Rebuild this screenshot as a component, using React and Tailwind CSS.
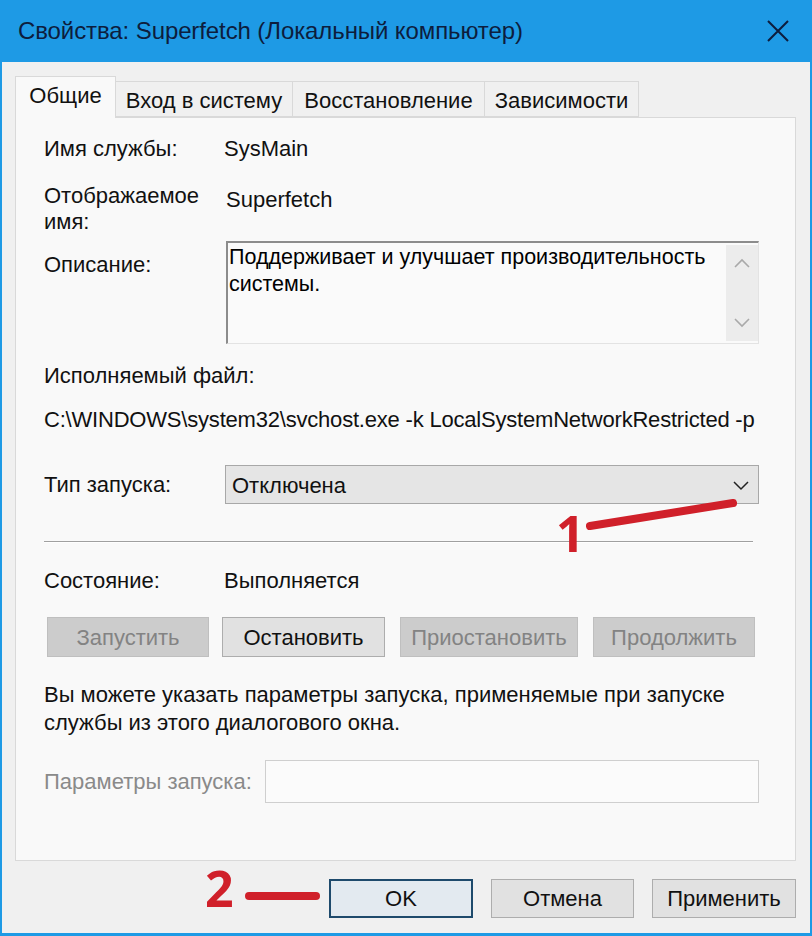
import React from "react";

const F = { fontFamily: '"Liberation Sans", Arial, sans-serif' };

function Btn({ children, disabled, className = "" }) {
  return (
    <div
      className={
        "flex items-center justify-center h-[40px] text-[22px] border " +
        (disabled
          ? "bg-[#cccccc] border-[#bfbfbf] text-[#838383] "
          : "bg-[#e1e1e1] border-[#adadad] text-[#111] ") +
        className
      }
    >
      {children}
    </div>
  );
}

export default function App() {
  return (
    <div className="w-[812px] h-[936px] flex flex-col bg-[#1e9ae5] relative text-[#111]" style={F}>
      {/* title bar */}
      <div className="h-[62px] flex items-center justify-between pl-[18px] pr-[20px] bg-[#1e9ae5]">
        <span className="text-[24px] text-[#0d1d3d] tracking-[-0.1px]">Свойства: Superfetch (Локальный компьютер)</span>
        <svg width="22" height="22" viewBox="0 0 22 22" className="mr-[3px]">
          <path d="M1 1 L21 21 M21 1 L1 21" stroke="#0d1d3d" strokeWidth="2" />
        </svg>
      </div>
      {/* body */}
      <div className="flex-1 mx-[2px] mb-[3px] bg-[#f0f0f0] flex flex-col pl-[13px] pr-[14px]">
        {/* tabs */}
        <div className="flex items-end h-[55px] relative z-10">
          <div className="h-[42px] w-[101px] bg-[#f9f9f9] border border-b-0 border-[#d9d9d9] flex items-center justify-center text-[22px] -mb-px pb-[4px]">
            Общие
          </div>
          <div className="h-[36px] w-[177px] bg-[#f0f0f0] border border-l-0 border-[#d9d9d9] flex items-center justify-center text-[22px] pt-[2px]">
            Вход в систему
          </div>
          <div className="h-[36px] w-[192px] bg-[#f0f0f0] border border-l-0 border-[#d9d9d9] flex items-center justify-center text-[22px] pt-[2px]">
            Восстановление
          </div>
          <div className="h-[36px] w-[154px] bg-[#f0f0f0] border border-l-0 border-[#d9d9d9] flex items-center justify-center text-[22px] pt-[2px]">
            Зависимости
          </div>
        </div>
        {/* panel */}
        <div className="h-[744px] bg-[#f9f9f9] border border-[#d9d9d9] flex flex-col pl-[28px] pr-[36px] text-[22px]">
          <div className="flex h-[26px] mt-[17px] items-center">
            <div className="w-[180px]">Имя службы:</div>
            <div>SysMain</div>
          </div>
          <div className="flex mt-[22px] h-[52px]">
            <div className="w-[182px] leading-[26px]">Отображаемое<br />имя:</div>
            <div className="leading-[26px] pt-[4px]">Superfetch</div>
          </div>
          <div className="flex mt-[6px] h-[103px]">
            <div className="w-[182px] pt-[11px] leading-[26px]">Описание:</div>
            <div className="flex-1 border-t-2 border-l-2 border-[#8c8c8c] border-r border-b border-r-[#e3e3e3] border-b-[#e3e3e3] bg-[#fafafa] flex">
              <div className="flex-1 pl-[1px] pt-[1px] leading-[27px] text-[21.5px] text-black">
                Поддерживает и улучшает производительность системы.
              </div>
              <div className="w-[32px] mt-[2px] mb-[2px] bg-[#ececec] flex flex-col items-center justify-between py-[13px]">
                <svg width="16" height="10" viewBox="0 0 16 10"><path d="M1 9 L8 2 L15 9" stroke="#a9a9a9" strokeWidth="1.6" fill="none" /></svg>
                <svg width="16" height="10" viewBox="0 0 16 10"><path d="M1 1 L8 8 L15 1" stroke="#a9a9a9" strokeWidth="1.6" fill="none" /></svg>
              </div>
            </div>
          </div>
          <div className="mt-[19px] h-[26px] leading-[26px]">Исполняемый файл:</div>
          <div className="mt-[18px] h-[26px] leading-[26px] whitespace-nowrap tracking-[-0.2px]">
            C:\WINDOWS\system32\svchost.exe -k LocalSystemNetworkRestricted -p
          </div>
          <div className="flex mt-[32px] h-[39px] items-center">
            <div className="w-[181px]">Тип запуска:</div>
            <div className="flex-1 h-full bg-[#e5e5e5] border border-[#a8a8a8] flex items-center justify-between pl-[6px] pr-[9px] pt-[2px]">
              <span>Отключена</span>
              <svg width="16" height="10" viewBox="0 0 16 10"><path d="M1 1 L8 8 L15 1" stroke="#222" strokeWidth="1.5" fill="none" /></svg>
            </div>
          </div>
          <div className="mt-[37px] h-[2px] mr-[6px] border-t border-[#a0a0a0] border-b border-b-[#ffffff]" />
          <div className="flex mt-[24px] h-[26px] items-center">
            <div className="w-[180px]">Состояние:</div>
            <div>Выполняется</div>
          </div>
          <div className="flex mt-[24px] pl-[3px]">
            <Btn disabled className="w-[162px]">Запустить</Btn>
            <Btn className="w-[163px] ml-[13px]">Остановить</Btn>
            <Btn disabled className="w-[178px] ml-[15px]">Приостановить</Btn>
            <Btn disabled className="w-[162px] ml-[15px]">Продолжить</Btn>
          </div>
          <div className="mt-[24px] leading-[28px]">
            Вы можете указать параметры запуска, применяемые при запуске<br />
            службы из этого диалогового окна.
          </div>
          <div className="flex mt-[23px] h-[43px] items-center">
            <div className="w-[221px] text-[#8a8a8a]">Параметры запуска:</div>
            <div className="flex-1 h-full border border-[#cfcfcf] bg-[#fbfbfb]" />
          </div>
        </div>
        {/* bottom buttons */}
        <div className="flex justify-end mt-[18px] gap-[18px]">
          <div className="w-[144px] h-[39px] flex items-center justify-center text-[22px] bg-[#e3eaf0] border-2 border-[#1e4a6c]">OK</div>
          <div className="w-[143px] h-[39px] flex items-center justify-center text-[22px] bg-[#e1e1e1] border border-[#adadad]">Отмена</div>
          <div className="w-[144px] h-[39px] flex items-center justify-center text-[22px] bg-[#e1e1e1] border border-[#adadad]">Применить</div>
        </div>
      </div>

      {/* red annotations */}
      <div className="absolute left-[556px] top-[508px] text-[50px] font-bold text-[#d0202a] leading-none" style={{ fontFamily: '"Open Sans", sans-serif' }}>1</div>
      <svg className="absolute left-0 top-0 pointer-events-none" width="812" height="936">
        <line x1="590" y1="526" x2="733" y2="503" stroke="#d0202a" strokeWidth="8" strokeLinecap="round" />
        <line x1="249" y1="896" x2="316" y2="896" stroke="#d0202a" strokeWidth="8" strokeLinecap="round" />
      </svg>
      <div className="absolute left-[205px] top-[863px] text-[50px] font-bold text-[#d0202a] leading-none" style={{ fontFamily: '"Open Sans", sans-serif' }}>2</div>
    </div>
  );
}
